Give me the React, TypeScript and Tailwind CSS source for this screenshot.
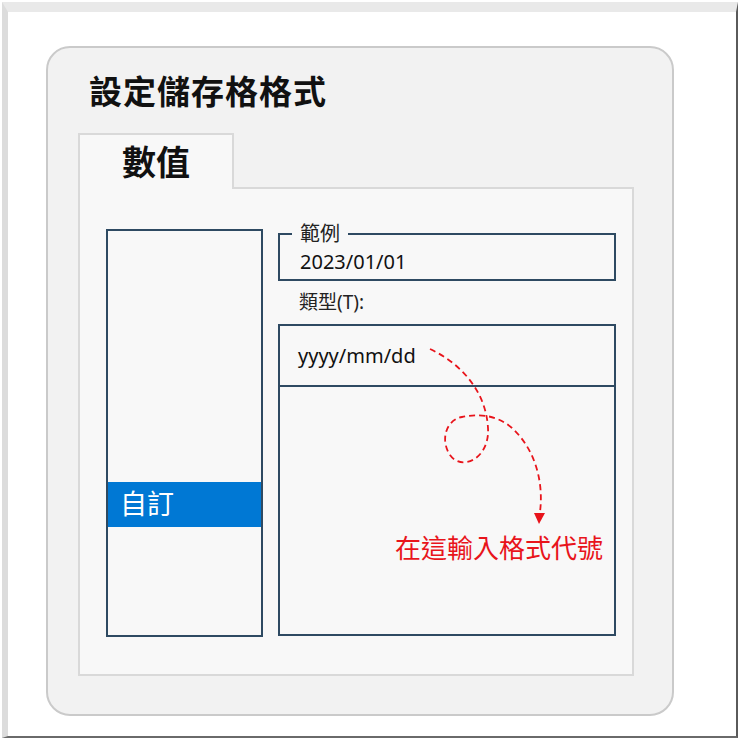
const cjk = { fontFamily: '"Noto Sans", "Noto Sans CJK TC", sans-serif' };

export default function App() {
  return (
    <div
      className="relative h-[740px] w-[740px] overflow-hidden bg-white p-[2px] text-[#111]"
      style={cjk}
    >
      <div className="h-full w-full border-t-[10px] border-r-[2px] border-b-[2px] border-l-[6px] border-t-[#e9e9e9] border-r-[#5a5a5a] border-b-[#6a6a6a] border-l-[#dcdcdc] pt-[34px] pl-[38px]">
        <div className="h-[670px] w-[628px] rounded-[24px] border-2 border-[#cacaca] bg-[#f2f2f2]">
          <h1 className="pt-[24px] pl-[41px] text-[33px] leading-[40px] font-bold tracking-[1px]">
            設定儲存格格式
          </h1>

          <div className="mt-[21px] ml-[30px] w-[556px]">
            {/* tab */}
            <div className="relative z-10 -mb-[2px] flex h-[56px] w-[156px] items-center justify-center border-2 border-b-0 border-[#d9d9d9] bg-[#f8f8f8]">
              <span className="text-[34px] leading-none font-bold">數值</span>
            </div>

            {/* panel */}
            <div className="flex h-[489px] gap-[15px] border-2 border-[#d9d9d9] bg-[#f8f8f8] pt-[40px] pl-[26px]">
              <div className="h-[408px] w-[157px] border-2 border-[#2e4a62] pt-[251px]">
                <div className="flex h-[45px] items-center bg-[#0078d4] pl-[12px] text-[27px] text-white">
                  自訂
                </div>
              </div>

              <div className="-mt-[6px] w-[338px]">
                <fieldset className="border-2 border-[#2e4a62] pr-[8px] pb-[4px] pl-[12px]">
                  <legend className="px-[8px] text-[20px] leading-[22px] text-[#222]">
                    範例
                  </legend>
                  <div className="pt-[4px] pl-[8px] text-[20px] leading-[26px] text-[#111]">
                    2023/01/01
                  </div>
                </fieldset>

                <div className="mt-[8px] pl-[21px] text-[19px] leading-[26px] text-[#222]">
                  類型(T):
                </div>

                <div className="mt-[9px] h-[312px] border-2 border-[#2e4a62]">
                  <div className="flex h-[61px] items-center border-b-2 border-[#2e4a62] pl-[18px] text-[20px] text-[#111]">
                    yyyy/mm/dd
                  </div>
                  <div className="pt-[145px] pl-[115px] text-[26px] leading-[32px] text-[#e8141b]">
                    在這輸入格式代號
                  </div>
                </div>
              </div>
            </div>
          </div>
        </div>
      </div>

      {/* dashed arrow overlay */}
      <svg
        className="pointer-events-none absolute top-0 left-0"
        width="740"
        height="740"
        viewBox="0 0 740 740"
      >
        <path
          d="M430 349 C 462 364, 486 392, 488 428 C 490 458, 462 472, 450 455 C 440 440, 446 420, 462 417 C 478 414, 496 414, 512 428 C 534 448, 544 480, 540 512"
          fill="none"
          stroke="#e8141b"
          strokeWidth="1.8"
          strokeDasharray="6 4"
        />
        <path d="M534 513 L545 513 L539 524 Z" fill="#e8141b" />
      </svg>
    </div>
  );
}
